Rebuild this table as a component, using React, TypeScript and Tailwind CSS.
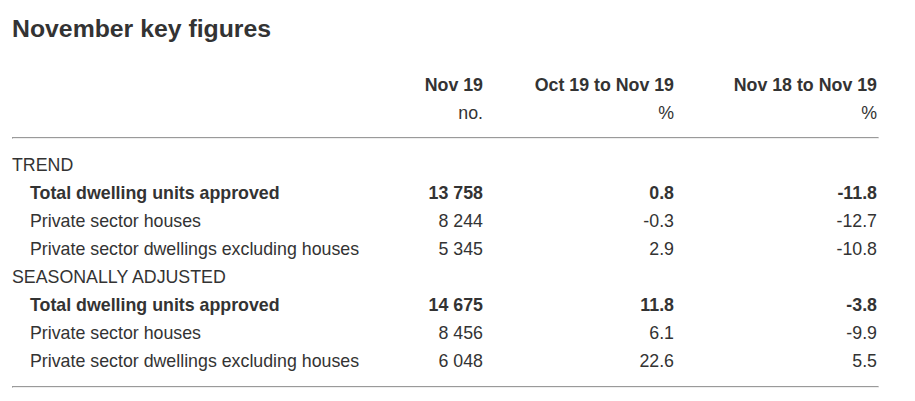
// November key figures table, dwelling approvals.

const rows: { label: string; kind: "section" | "total" | "item"; values?: [string, string, string] }[] = [
  { label: "TREND", kind: "section" },
  { label: "Total dwelling units approved", kind: "total", values: ["13 758", "0.8", "-11.8"] },
  { label: "Private sector houses", kind: "item", values: ["8 244", "-0.3", "-12.7"] },
  { label: "Private sector dwellings excluding houses", kind: "item", values: ["5 345", "2.9", "-10.8"] },
  { label: "SEASONALLY ADJUSTED", kind: "section" },
  { label: "Total dwelling units approved", kind: "total", values: ["14 675", "11.8", "-3.8"] },
  { label: "Private sector houses", kind: "item", values: ["8 456", "6.1", "-9.9"] },
  { label: "Private sector dwellings excluding houses", kind: "item", values: ["6 048", "22.6", "5.5"] },
];

function Rule() {
  return (
    <div className="h-0 w-[867px] border border-t-[#9a9a9a] border-l-[#9a9a9a] border-b-[#eeeeee] border-r-[#eeeeee]" />
  );
}

export default function App() {
  return (
    <div
      className="min-h-[401px] w-[915px] bg-white px-[12px] text-[17.8px] text-[#333333]"
      style={{ fontFamily: '"Liberation Sans", Arial, sans-serif' }}
    >
      <h2 className="pt-[14px] text-[24.8px] font-bold leading-[30px]">November key figures</h2>

      <div className="mt-[27px] grid grid-cols-[371px_100px_191px_203px] leading-[28px]">
        <div />
        <div className="text-right font-bold">Nov 19</div>
        <div className="text-right font-bold">Oct 19 to Nov 19</div>
        <div className="text-right font-bold">Nov 18 to Nov 19</div>
        <div />
        <div className="text-right">no.</div>
        <div className="text-right">%</div>
        <div className="text-right">%</div>
      </div>

      <div className="mt-[10px]">
        <Rule />
      </div>

      <div className="mt-[12px] grid grid-cols-[371px_100px_191px_203px] leading-[28px]">
        {rows.map((r, i) =>
          r.kind === "section" ? (
            <div key={i} className="col-span-4">
              {r.label}
            </div>
          ) : (
            <div key={i} className={`contents ${r.kind === "total" ? "font-bold" : ""}`}>
              <div className="pl-[18px]">{r.label}</div>
              <div className="text-right">{r.values![0]}</div>
              <div className="text-right">{r.values![1]}</div>
              <div className="text-right">{r.values![2]}</div>
            </div>
          ),
        )}
      </div>

      <div className="mt-[11px]">
        <Rule />
      </div>
    </div>
  );
}
